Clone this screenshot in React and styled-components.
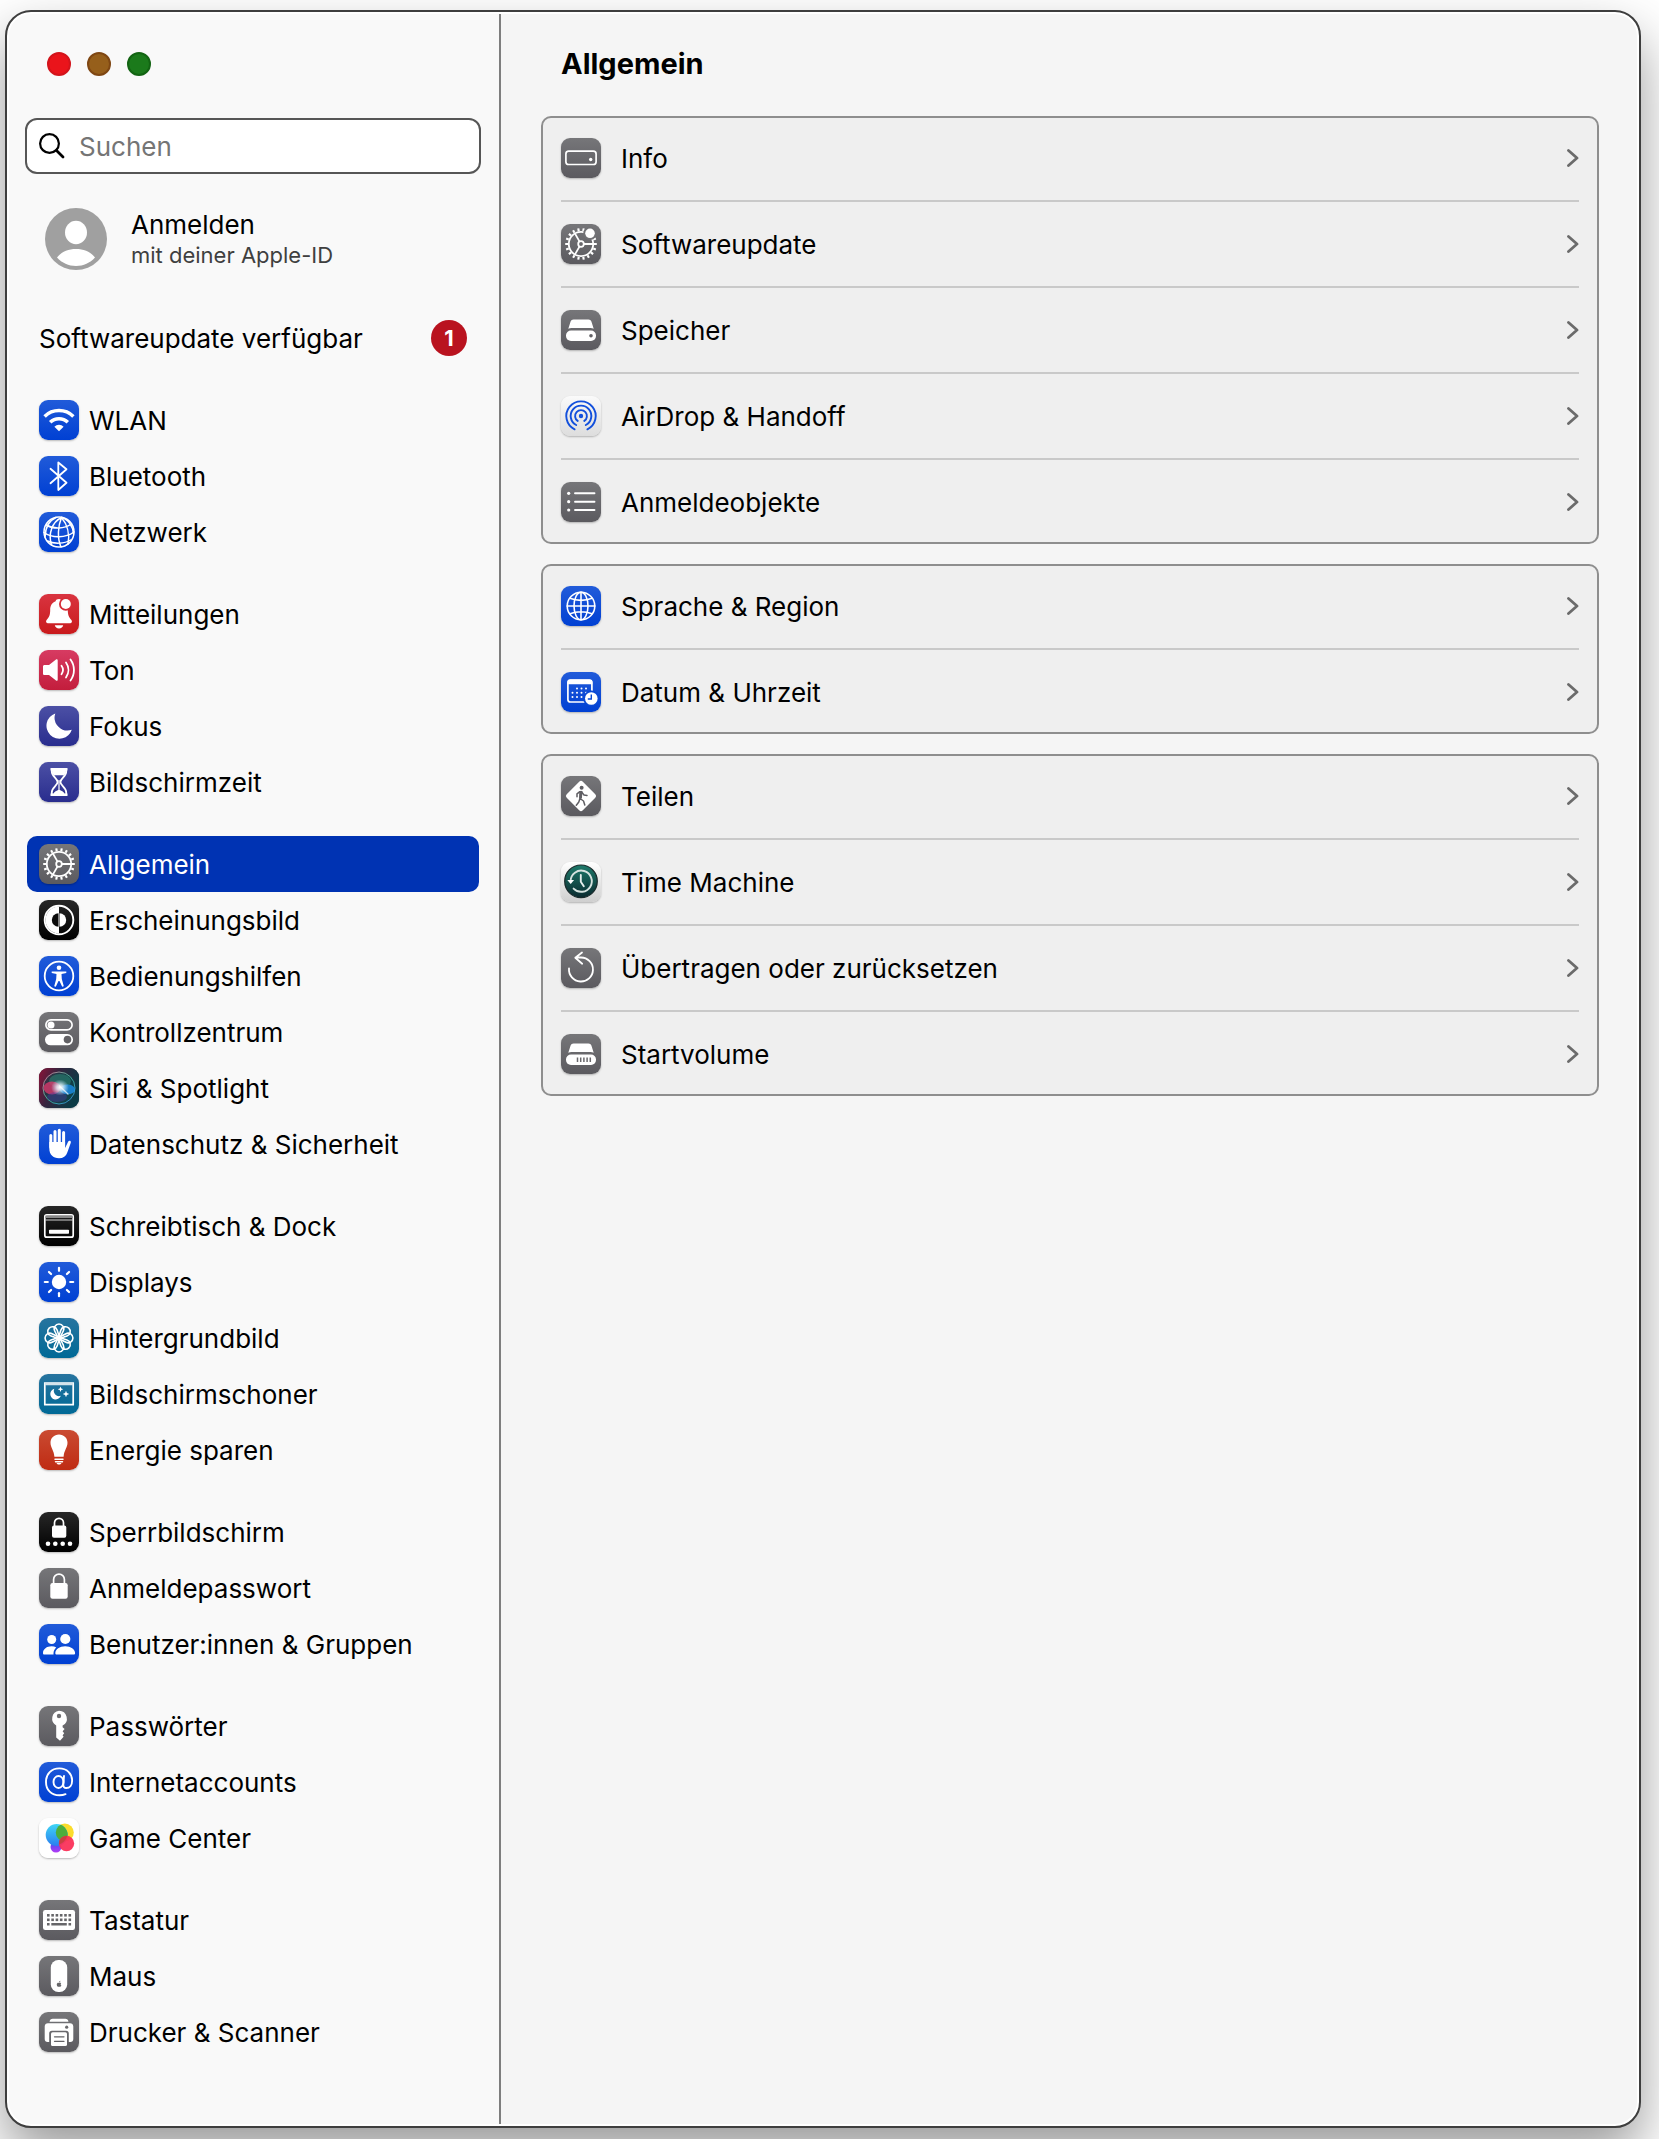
import React from "react";
import styled, { createGlobalStyle, css } from "styled-components";

const GlobalStyle = createGlobalStyle`
  *, *::before, *::after { box-sizing: border-box; }
  body {
    margin: 0;
    background: #fff;
    color: #000;
    font-family: Inter, "Liberation Sans", sans-serif;
    font-size: 26px;
    line-height: 32px;
  }
  ul { list-style: none; margin: 0; padding: 0; }
  a { color: inherit; text-decoration: none; }
`;

const Desktop = styled.div`
  min-height: 100vh;
  padding: 10px 18px 11px 5px;
  display: flex;
  overflow: hidden;
`;

const Window = styled.div`
  flex: 1;
  display: flex;
  padding: 2px;
  border: 2px solid #3e3e3e;
  border-radius: 26px;
  background: #fff;
  box-shadow: 0 26px 54px rgba(0, 0, 0, 0.4);
`;

const Sidebar = styled.aside`
  flex: none;
  width: 492px;
  padding: 38px 18px 60px 16px;
  background: #f9f9f9;
  border-right: 2px solid #7e7e7e;
  border-radius: 22px 0 0 22px;
`;

const Main = styled.main`
  flex: 1;
  min-width: 0;
  padding: 32px 38px 40px 40px;
  background: #f5f5f5;
  border-radius: 0 22px 22px 0;
`;

const WindowControls = styled.div`
  display: flex;
  gap: 16px;
  padding-left: 22px;
`;

const Light = styled.button`
  width: 24px;
  height: 24px;
  padding: 0;
  border: 2px solid ${(p) => p.$edge};
  border-radius: 50%;
  background: ${(p) => p.$fill};
`;

const SearchField = styled.label`
  display: flex;
  align-items: center;
  gap: 14px;
  height: 56px;
  margin-top: 42px;
  padding: 0 12px;
  border: 2px solid #565656;
  border-radius: 12px;
  background: #fff;
`;

const SearchInput = styled.input`
  flex: 1;
  min-width: 0;
  padding: 2px 0 0;
  border: 0;
  outline: 0;
  background: transparent;
  font: inherit;
  &::placeholder { color: #757575; opacity: 1; }
`;

const Account = styled.a`
  display: flex;
  align-items: center;
  gap: 24px;
  margin-top: 34px;
  padding-left: 20px;
`;

const AccountText = styled.div`
  display: flex;
  flex-direction: column;
`;

const AccountHint = styled.span`
  font-size: 22px;
  line-height: 28px;
  color: #3f3f3f;
`;

const UpdateNotice = styled.a`
  display: flex;
  align-items: center;
  justify-content: space-between;
  height: 56px;
  margin-top: 40px;
  padding: 0 14px;
`;

const Badge = styled.span`
  width: 36px;
  height: 36px;
  border-radius: 50%;
  background: #b9131f;
  color: #fff;
  font-size: 22px;
  font-weight: 700;
  line-height: 36px;
  text-align: center;
`;

const NavGroup = styled.ul`
  margin: 26px 2px 0;
`;

const NavLink = styled.a`
  display: flex;
  align-items: center;
  gap: 10px;
  height: 56px;
  padding: 0 12px;
  border-radius: 10px;
  ${(p) => p.$active && css`
    background: #0033b3;
    color: #fff;
  `}
`;

const Label = styled.span`
  flex: 1;
  padding-top: 2px;
`;

const Title = styled.h1`
  margin: 0 0 34px;
  padding-left: 20px;
  font-size: 29px;
  font-weight: 700;
  line-height: 36px;
`;

const Card = styled.ul`
  padding: 0 18px;
  border: 2px solid #8e8e8e;
  border-radius: 10px;
  background: #efefef;
  & + & { margin-top: 20px; }
`;

const CardItem = styled.li`
  & + & { border-top: 2px solid #c9c9c9; }
  &:first-child > a { padding-top: 20px; }
  &:last-child > a { padding-bottom: 20px; }
`;

const CardLink = styled.a`
  display: flex;
  align-items: center;
  gap: 20px;
  padding: 22px 0;
`;

const tones = {
  blue: ["#215bd9", "#0040d3"],
  red: ["#d93440", "#c91a1c"],
  pink: ["#d73b62", "#c31d3c"],
  indigo: ["#4c50a5", "#292d8e"],
  gray: ["#767679", "#5b5a5f"],
  black: ["#272727", "#000000"],
  teal: ["#27749f", "#006996"],
  orange: ["#ca4b32", "#bf2b13"],
  white: ["#ffffff", "#ffffff"],
  silver: ["#fafafa", "#dddddd"],
  pearl: ["#ffffff", "#cfcfcf"],
  siri: ["#2a1c2c", "#123050"],
};

const Tile = styled.span`
  flex: none;
  width: 40px;
  height: 40px;
  border-radius: 9px;
  overflow: hidden;
  background: linear-gradient(${(p) => tones[p.$tone][0]}, ${(p) => tones[p.$tone][1]});
  box-shadow: 0 1px 2px rgba(0, 0, 0, 0.26);
  svg { display: block; }
`;

const line = { fill: "none", stroke: "#fff", strokeLinecap: "round", strokeLinejoin: "round" };

const spin = (count, draw) =>
  Array.from({ length: count }, (_, i) => (
    <g key={i} transform={`rotate(${(i * 360) / count} 20 20)`}>{draw}</g>
  ));

const Gear = () => (
  <g {...line} strokeLinecap="butt" strokeWidth="1.8">
    <circle cx="20" cy="20" r="12.2" />
    <circle cx="20" cy="20" r="2.8" />
    {spin(18, <path d="M33 20h2.8" strokeWidth="2.1" />)}
    {spin(3, <path d="M22.8 20H32" />)}
  </g>
);

const Drive = () => (
  <>
    <path d="M12.5 9.5h15c1.4 0 2.4.7 2.9 2l2.3 7.200c-1-.4-2-.6-3.200-.6h-19c-1.200 0-2.200.2-3.200.6l2.300-7.200c.5-1.300 1.500-2 2.900-2z" fill="#fff" />
    <rect x="5" y="20.5" width="30" height="10.5" rx="5" fill="#fff" />
  </>
);

const glyphs = {
  wifi: (
    <>
      <path d="M5.6 16.5a20.5 20.5 0 0 1 28.8 0M11.2 22.3a12.5 12.5 0 0 1 17.6 0" {...line} strokeWidth="3.5" strokeLinecap="butt" />
      <path d="M20 31.3l-4.6-4.6a6.5 6.5 0 0 1 9.2 0z" fill="#fff" />
    </>
  ),
  bluetooth: <path d="M11.5 12.8l16 14L19.3 34V6.500l8.200 6.700-16 14" {...line} strokeWidth="1.8" />,
  network: (
    <g {...line} strokeWidth="1.5">
      <circle cx="20" cy="20" r="15" />
      <path d="M22.5 5.5C13 10 9 22 12.5 33M22.5 5.5C19 14 18 26 22 35M22.5 5.5C28 12 31 22 29 32" />
      <path d="M17 5.5C11 8 6.500 14 6 25M22.500 5.500C29 7 34 14 34.500 22" />
      <path d="M7.500 13c7 4.500 17.500 4 25-1M5 20.500c8 6 22 5.500 30-.5M8.500 29c6 3 17 3 23-1" />
    </g>
  ),
  bell: (
    <>
      <path d="M20 5c-2 0-3 .8-3.400 2.200C12.500 8.800 11.200 12 11.200 16c0 5-1.200 7.500-3.600 10-1 1.200-.6 3.200 1 3.200h22.800c1.600 0 2-2 1-3.200-2.400-2.500-3.600-5-3.600-10 0-4-1.300-7.200-5.400-8.800C23 5.800 22 5 20 5z" fill="#fff" />
      <path d="M15.800 31.300h8.400c-.3 2-2 3.200-4.200 3.200s-3.900-1.200-4.200-3.200z" fill="#fff" />
      <circle cx="26.8" cy="10" r="6.800" fill="#d52d37" />
      <circle cx="26.8" cy="10" r="5" fill="#fff" />
    </>
  ),
  sound: (
    <>
      <path d="M4 16.500c0-1 .6-1.600 1.600-1.600H10l7-5.400c.8-.6 1.700-.2 1.700.8v19.400c0 1-.9 1.400-1.700.8l-7-5.400H5.600c-1 0-1.600-.6-1.600-1.600z" fill="#fff" />
      <path d="M22.500 15.800c1.800 2.500 1.800 5.900 0 8.400M27 12.500c3.200 4.500 3.200 10.500 0 15M31.500 9.500c4.600 6.300 4.600 14.700 0 21" {...line} strokeWidth="1.8" />
    </>
  ),
  moon: <path d="M16.300 7.400A13 13 0 1 0 32.800 23.800 13 13 0 0 1 16.300 7.400z" fill="#fff" />,
  hourglass: (
    <>
      <path d="M12.800 7.200h14.400v2.600c0 4.600-5.800 6.700-5.800 10.200s5.800 5.600 5.800 10.200v2.600H12.800v-2.600c0-4.600 5.800-6.700 5.800-10.200s-5.800-5.600-5.800-10.200z" {...line} strokeWidth="1.8" />
      <path d="M11.500 6h17v2.600h-17zM11.500 31.400h17V34h-17zM13 8h14c0 2.500-.8 3.800-2 5.200H15C13.800 11.800 13 10.500 13 8zM20 27.500c2.500 1.200 4.600 2.300 6 4.500H14c1.400-2.200 3.500-3.300 6-4.500zM19.400 18h1.200v11h-1.200z" fill="#fff" />
    </>
  ),
  gear: <Gear />,
  appearance: (
    <>
      <circle cx="20" cy="20" r="14.3" {...line} strokeWidth="1.9" />
      <path d="M20 6.500a13.500 13.500 0 0 0 0 27z" fill="#fff" />
      <path d="M19.500 13.300a6.700 6.700 0 0 0 0 13.400z" fill="#0c0c0c" />
      <path d="M20.500 13.300a6.700 6.700 0 0 1 0 13.400z" fill="#fff" />
    </>
  ),
  accessibility: (
    <>
      <circle cx="20" cy="20" r="14.3" {...line} strokeWidth="1.8" />
      <circle cx="20" cy="11.8" r="2.3" fill="#fff" />
      <path d="M12.700 15.500h14.600v1.600l-4.800.9.300 5 2 7.300-1.600.5L20.500 25h-1l-2.700 5.800-1.600-.5 2-7.300.3-5-4.800-.9z" fill="#fff" />
    </>
  ),
  switches: (
    <>
      <rect x="6.9" y="7.9" width="26.2" height="10" rx="5" {...line} strokeWidth="1.7" />
      <circle cx="12" cy="12.9" r="3.5" fill="#fff" />
      <rect x="6" y="22" width="28" height="11.3" rx="5.6" fill="#fff" />
      <circle cx="28.5" cy="27.6" r="3.8" fill="#626165" />
    </>
  ),
  siri: (
    <>
      <defs>
        <linearGradient id="siriBack" x1="0" y1="0" x2="1" y2="0.4">
          <stop offset="0" stopColor="#8c1238" />
          <stop offset="0.45" stopColor="#35243e" />
          <stop offset="1" stopColor="#0b3a45" />
        </linearGradient>
        <linearGradient id="siriRing" x1="0" y1="0" x2="1" y2="1">
          <stop offset="0" stopColor="#e06a95" />
          <stop offset="0.5" stopColor="#3fb093" />
          <stop offset="1" stopColor="#2b7fd6" />
        </linearGradient>
        <radialGradient id="siriGlow">
          <stop offset="0" stopColor="#fff" />
          <stop offset="0.35" stopColor="#e8f6ff" stopOpacity="0.8" />
          <stop offset="1" stopColor="#bfe6ff" stopOpacity="0" />
        </radialGradient>
      </defs>
      <rect width="40" height="40" fill="url(#siriBack)" />
      <circle cx="20" cy="20" r="16" fill="#0d4a4c" fillOpacity="0.5" stroke="url(#siriRing)" strokeWidth="1" />
      <ellipse cx="21" cy="13" rx="11" ry="7" fill="#2f9c80" opacity="0.45" />
      <ellipse cx="13" cy="20" rx="8.5" ry="6.5" fill="#e3386e" opacity="0.75" />
      <ellipse cx="28.500" cy="21.5" rx="7.5" ry="5" fill="#1c8fe8" opacity="0.8" />
      <ellipse cx="18" cy="29" rx="10" ry="5" fill="#4b3ea8" opacity="0.4" />
      <ellipse cx="21" cy="19.5" rx="9" ry="8" fill="url(#siriGlow)" />
      <path d="M20.500 18L29 26" stroke="#fff" strokeWidth="1.200" strokeLinecap="round" opacity="0.7" />
    </>
  ),
  hand: (
    <>
      <path d="M11.800 11.500V23M16 7.500V21M20.300 6.300V21M24.600 8.500V22" {...line} strokeWidth="3" />
      <path d="M10.300 18h15.800v6l3-6.300c.7-1.500 3.300-1 2.700 1l-3.400 9.500c-1.400 4-4.200 6-8.400 6-6 0-9.700-3.700-9.700-10z" fill="#fff" />
    </>
  ),
  dock: (
    <>
      <rect x="5.8" y="8.8" width="28.4" height="22.4" rx="2" {...line} strokeWidth="1.7" />
      <path d="M6.500 9.500h27V12h-27z" fill="#8a8a8a" />
      <path d="M6 14h28" stroke="#cfcfcf" strokeWidth="1" />
      <rect x="10" y="23.7" width="20" height="4" rx="0.8" fill="#fff" />
    </>
  ),
  sun: (
    <>
      <circle cx="20" cy="20" r="7.2" fill="#fff" />
      {spin(8, <path d="M31.200 20h3" {...line} strokeWidth="2.2" />)}
    </>
  ),
  flower: (
    <g {...line} strokeWidth="1.6">
      {spin(8, <path d="M20 21.500L15.700 13A4.800 4.800 0 1 1 24.300 13z" />)}
    </g>
  ),
  screensaver: (
    <>
      <path d="M5.800 9.200h28.400v21.400H5.800z" {...line} strokeWidth="1.7" strokeLinejoin="miter" />
      <path d="M5.800 9h28.400v2.200H5.800z" fill="#d4e4ec" />
      <path d="M15.300 14.800A5.400 5.400 0 1 0 21.800 21.800 5.200 5.200 0 0 1 15.300 14.800z" fill="#fff" />
      <path d="M21.500 12.500l.8 2 2 .8-2 .8-.8 2-.8-2-2-.8 2-.8zM27 16.700l.9 2.400 2.400.9-2.400.9-.9 2.400-.9-2.400-2.400-.9 2.400-.9z" fill="#fff" />
    </>
  ),
  bulb: (
    <>
      <path d="M20 4.500c5 0 8.500 3.600 8.500 8.300 0 5-3.300 7.200-3.900 13.900h-9.200c-.6-6.700-3.900-8.900-3.900-13.900 0-4.700 3.500-8.300 8.500-8.300z" fill="#fff" />
      <path d="M16 29.200h8M16.500 31.800h7" {...line} strokeWidth="1.5" />
      <path d="M17.500 33h5c-.6 1-1.400 1.500-2.500 1.500s-1.900-.5-2.500-1.500z" fill="#fff" />
    </>
  ),
  lockDots: (
    <>
      <path d="M15.500 14v-3.200a4.500 4.500 0 0 1 9 0V14" {...line} strokeWidth="1.7" />
      <rect x="13" y="13.5" width="14.3" height="12.3" rx="2" fill="#fff" />
      {[9, 16.3, 23.7, 31].map((x) => <circle key={x} cx={x} cy="31.7" r="2.3" fill="#fff" />)}
    </>
  ),
  lock: (
    <>
      <path d="M14.600 15.500v-4a5.400 5.400 0 0 1 10.800 0v4" {...line} strokeWidth="1.7" />
      <rect x="11.3" y="15" width="17.4" height="15.7" rx="2.2" fill="#fff" />
    </>
  ),
  people: (
    <g fill="#fff">
      <circle cx="12.7" cy="15.5" r="4.5" />
      <circle cx="26.3" cy="15" r="5.1" />
      <path d="M4 29c0-4 3.800-6.800 8.500-6.800 1.900 0 3.500.4 4.800 1.200-1.800 1.600-2.800 3.700-2.800 6.100v1H5.300C4.500 30.500 4 30 4 29z" />
      <path d="M16.300 29.200c0-4 4.400-7 9.900-7s9.900 3 9.900 7c0 .8-.6 1.300-1.400 1.300H17.700c-.8 0-1.400-.5-1.400-1.300z" />
    </g>
  ),
  key: (
    <>
      <path d="M20 4.700a7.900 7.900 0 0 1 3.600 14.900v1.600l2 1.800-2 2.200 1.600 2-1.600 2 1 1.600-3.600 3.900-3.800-3.200V19.400A7.900 7.900 0 0 1 20 4.700z" fill="#fff" />
      <circle cx="20" cy="10" r="2.2" fill="#6d6d70" />
    </>
  ),
  at: (
    <g {...line} strokeWidth="1.9">
      <ellipse cx="19.5" cy="20" rx="5" ry="6" />
      <path d="M25 14l-.7 8.500c-.2 2.300 1 3.500 3 3.500 3.400 0 5.800-2.800 5.800-7.300C33.100 11.500 27.800 6.400 20.300 6.400 12.500 6.400 7 11.800 7 19.900 7 28 12.300 33.300 20.500 33.300c2.300 0 4.300-.4 6-1.100" />
    </g>
  ),
  gameCenter: (
    <>
      <defs>
        <linearGradient id="gcBlue" x1="0" y1="0" x2="0" y2="1">
          <stop offset="0" stopColor="#3fd6f5" />
          <stop offset="1" stopColor="#2a7df0" />
        </linearGradient>
        <linearGradient id="gcPurple" x1="0" y1="0" x2="0" y2="1">
          <stop offset="0" stopColor="#3a50f0" />
          <stop offset="1" stopColor="#b43af5" />
        </linearGradient>
        <clipPath id="gcOverlap"><circle cx="25.8" cy="14.5" r="9" /></clipPath>
      </defs>
      <circle cx="17" cy="29" r="5.5" fill="url(#gcPurple)" />
      <circle cx="25.8" cy="14.5" r="9" fill="#fbdc2c" />
      <circle cx="17.7" cy="17" r="11" fill="url(#gcBlue)" />
      <circle cx="17.7" cy="17" r="11" fill="#4cae3c" clipPath="url(#gcOverlap)" />
      <circle cx="27.5" cy="25.5" r="7.7" fill="#fb3158" opacity="0.94" />
      <path d="M20 24a7.700 7.700 0 0 1 8-6.200c-.6 3.500-3.300 7-8 8.800z" fill="#c9413f" />
    </>
  ),
  keyboard: (
    <>
      <rect x="4" y="10" width="32" height="20" rx="2.3" fill="#fff" />
      <g fill="#666669">
        {[14, 18.5].map((y) => [8, 12.3, 16.6, 20.9, 25.2, 29.5].map((x) => <rect key={`${x}-${y}`} x={x} y={y} width="2.6" height="2.6" />))}
        <path d="M8 23h2.600v2.600H8zM12.300 23h15.500v2.600H12.300zM29.500 23h2.600v2.600h-2.600z" />
      </g>
    </>
  ),
  mouse: (
    <>
      <rect x="11.8" y="4" width="16.4" height="32" rx="7.5" fill="#fff" />
      <path d="M20 26.400c.1-.9.700-1.500 1.400-1.600 0 .9-.6 1.600-1.400 1.600zM20 27c.6-.3 1.600-.5 2.200.3-.8.7-.7 1.800.2 2.300-.5 1.200-1.200 1.500-2.200 1.100-2 .7-3.300-2.900-1.700-3.800.5-.3 1-.1 1.500.1z" fill="#666669" />
    </>
  ),
  printer: (
    <>
      <path d="M10.500 9.800c.3-2 1.400-3.100 3.200-3.100h12.600c1.800 0 2.900 1.100 3.200 3.100z" fill="#fff" />
      <path d="M9 11.300h22c2 0 3.300 1.200 3.300 3.300V27c0 2-1.100 3-3 3h-1.500v-8.500c0-1.800-1-2.800-2.700-2.800H12.900c-1.700 0-2.700 1-2.700 2.800V30H8.700c-1.900 0-3-1-3-3V14.600c0-2.100 1.300-3.300 3.300-3.300z" fill="#fff" />
      <circle cx="27.7" cy="15.2" r="1.6" fill="#6a6a6d" />
      <rect x="12" y="20.3" width="16" height="13.7" rx="1.6" fill="#fff" />
      <path d="M15.500 24.800h9.500M15.500 29.300h9.500" stroke="#626165" strokeWidth="1.3" strokeLinecap="round" />
    </>
  ),
  computer: (
    <>
      <rect x="4.9" y="13.1" width="30.2" height="13.4" rx="2.8" {...line} strokeWidth="1.7" />
      <circle cx="29.7" cy="21.5" r="1.7" fill="#fff" />
    </>
  ),
  gearBadge: (
    <>
      <Gear />
      <circle cx="29" cy="9.3" r="6.7" fill="#717174" />
      <circle cx="29" cy="9.3" r="4.8" fill="#fff" />
    </>
  ),
  drive: (
    <>
      <Drive />
      <circle cx="30" cy="25.8" r="1.8" fill="#626165" />
    </>
  ),
  airdrop: (
    <>
      <g {...line} stroke="#1350dc" strokeWidth="1.9">
        <path d="M13.600 33.300a14.700 14.700 0 1 1 12.800 0" />
        <path d="M15.200 29a10.300 10.300 0 1 1 9.600 0" />
        <path d="M16.700 24.900a5.900 5.900 0 1 1 6.600 0" />
      </g>
      <circle cx="20" cy="20" r="2.2" fill="#1350dc" />
    </>
  ),
  list: (
    <>
      {[11.3, 19.7, 28].map((y) => (
        <g key={y}>
          <circle cx="7.7" cy={y} r="1.6" fill="#fff" />
          <path d={`M14 ${y}h19.5`} {...line} strokeWidth="1.9" />
        </g>
      ))}
    </>
  ),
  globe: (
    <g {...line} strokeWidth="1.6">
      <circle cx="20" cy="20" r="13.8" />
      <ellipse cx="20" cy="20" rx="7" ry="13.8" />
      <path d="M20 6.200v27.600M6.200 20h27.600M9 12.300c6.500 2.700 15.500 2.700 22 0M9 27.700c6.500-2.700 15.500-2.700 22 0" />
    </g>
  ),
  calendar: (
    <>
      <rect x="6.9" y="8.2" width="24" height="21.8" rx="2.6" {...line} strokeWidth="1.7" />
      <path d="M6.500 12.300V10c0-1.600 1-2.500 2.500-2.500h19.700c1.600 0 2.600.9 2.600 2.500v2.300z" fill="#fff" />
      <g fill="#fff">
        {[[16, 16.5], [20.5, 16.5], [25, 16.5], [11.5, 20.8], [16, 20.8], [20.5, 20.8], [25, 20.8], [11.5, 25], [16, 25], [20.5, 25]].map(([x, y]) => (
          <circle key={`${x}-${y}`} cx={x} cy={y} r="1" />
        ))}
      </g>
      <circle cx="30.3" cy="26.5" r="8" fill="#0949d5" />
      <circle cx="30.3" cy="26.5" r="6.3" fill="#fff" />
      <path d="M30.300 22.500v4.500h-3.500" fill="none" stroke="#0949d5" strokeWidth="1.4" />
    </>
  ),
  sharing: (
    <>
      <rect x="8.6" y="8.6" width="22.8" height="22.8" rx="2.6" fill="#fff" transform="rotate(45 20 20)" />
      <circle cx="20.6" cy="11.8" r="2" fill="#5f5e63" />
      <path d="M20 15.500l-1 7 3.500 2.500 1.300 4M18.800 23l-1 3-2.500 3.200M18.500 15.800l-2.500 2v3M21 16.500l2 2.500 3 .5" fill="none" stroke="#5f5e63" strokeWidth="1.5" strokeLinecap="round" strokeLinejoin="round" />
      <path d="M18.300 15h3.200l-.6 7.500-2.800.2z" fill="#5f5e63" />
    </>
  ),
  timeMachine: (
    <>
      <defs>
        <linearGradient id="tmDisc" x1="0" y1="0" x2="0" y2="1">
          <stop offset="0" stopColor="#1d7a6a" />
          <stop offset="1" stopColor="#0b2b30" />
        </linearGradient>
      </defs>
      <circle cx="20" cy="19.3" r="16.3" fill="url(#tmDisc)" stroke="#1a2b2c" strokeWidth="1.2" />
      <path d="M9.600 19a10.600 10.600 0 1 1 3 7.600" {...line} stroke="#d5e2df" strokeWidth="1.9" />
      <path d="M6.300 18h6.800l-3.400 4z" fill="#fff" />
      <path d="M19.800 13v6.800l3 4.500" {...line} stroke="#e6eeec" strokeWidth="1.9" />
    </>
  ),
  reset: <path d="M8 20.500A12 12 0 1 0 20 9.500H14.500M21 4.500l-6.700 5.200 6.900 6" {...line} strokeWidth="1.8" />,
  startup: (
    <>
      <Drive />
      <path d="M16.500 23.500v4.500M19.700 23.500v4.500M22.900 23.500v4.500M26.100 23.500v4.500M29.300 23.500v4.500" stroke="#68676b" strokeWidth="1.5" />
    </>
  ),
};

const Icon = ({ name, tone }) => (
  <Tile $tone={tone}>
    <svg width="40" height="40" viewBox="0 0 40 40" aria-hidden="true">{glyphs[name]}</svg>
  </Tile>
);

const SearchIcon = () => (
  <svg width="26" height="26" viewBox="0 0 26 26" aria-hidden="true">
    <circle cx="10.5" cy="10.5" r="9.4" fill="none" stroke="#000" strokeWidth="2.200" />
    <path d="M17.500 17.500l6.500 6.500" stroke="#000" strokeWidth="2.8" strokeLinecap="round" />
  </svg>
);

const Avatar = () => (
  <svg width="62" height="62" viewBox="0 0 62 62" aria-hidden="true">
    <circle cx="31" cy="31" r="31" fill="#a0a0a0" />
    <ellipse cx="31" cy="24.5" rx="11" ry="11.7" fill="#fff" />
    <path d="M12 49.500C16 44 23 41 31 41s15 3 19 8.500C45 55 38.500 58 31 58s-14-3-19-8.500z" fill="#fff" />
  </svg>
);

const Chevron = () => (
  <svg width="12" height="20" viewBox="0 0 12 20" aria-hidden="true">
    <path d="M1.500 2.500l8.500 7.500-8.500 7.500" fill="none" stroke="#6b6b6b" strokeWidth="2.8" strokeLinecap="round" strokeLinejoin="round" />
  </svg>
);

const navigation = [
  [
    ["WLAN", "wifi", "blue"],
    ["Bluetooth", "bluetooth", "blue"],
    ["Netzwerk", "network", "blue"],
  ],
  [
    ["Mitteilungen", "bell", "red"],
    ["Ton", "sound", "pink"],
    ["Fokus", "moon", "indigo"],
    ["Bildschirmzeit", "hourglass", "indigo"],
  ],
  [
    ["Allgemein", "gear", "gray"],
    ["Erscheinungsbild", "appearance", "black"],
    ["Bedienungshilfen", "accessibility", "blue"],
    ["Kontrollzentrum", "switches", "gray"],
    ["Siri & Spotlight", "siri", "siri"],
    ["Datenschutz & Sicherheit", "hand", "blue"],
  ],
  [
    ["Schreibtisch & Dock", "dock", "black"],
    ["Displays", "sun", "blue"],
    ["Hintergrundbild", "flower", "teal"],
    ["Bildschirmschoner", "screensaver", "teal"],
    ["Energie sparen", "bulb", "orange"],
  ],
  [
    ["Sperrbildschirm", "lockDots", "black"],
    ["Anmeldepasswort", "lock", "gray"],
    ["Benutzer:innen & Gruppen", "people", "blue"],
  ],
  [
    ["Passwörter", "key", "gray"],
    ["Internetaccounts", "at", "blue"],
    ["Game Center", "gameCenter", "white"],
  ],
  [
    ["Tastatur", "keyboard", "gray"],
    ["Maus", "mouse", "gray"],
    ["Drucker & Scanner", "printer", "gray"],
  ],
];

const sections = [
  [
    ["Info", "computer", "gray"],
    ["Softwareupdate", "gearBadge", "gray"],
    ["Speicher", "drive", "gray"],
    ["AirDrop & Handoff", "airdrop", "silver"],
    ["Anmeldeobjekte", "list", "gray"],
  ],
  [
    ["Sprache & Region", "globe", "blue"],
    ["Datum & Uhrzeit", "calendar", "blue"],
  ],
  [
    ["Teilen", "sharing", "gray"],
    ["Time Machine", "timeMachine", "pearl"],
    ["Übertragen oder zurücksetzen", "reset", "gray"],
    ["Startvolume", "startup", "gray"],
  ],
];

export default function App() {
  const current = "Allgemein";
  return (
    <>
      <GlobalStyle />
      <Desktop>
        <Window>
          <Sidebar>
            <WindowControls>
              <Light type="button" aria-label="Schließen" $fill="#ea141b" $edge="#d3141b" />
              <Light type="button" aria-label="Minimieren" $fill="#965f1b" $edge="#7f4713" />
              <Light type="button" aria-label="Zoomen" $fill="#1b7a1b" $edge="#136413" />
            </WindowControls>
            <SearchField>
              <SearchIcon />
              <SearchInput type="text" aria-label="Suchen" placeholder="Suchen" />
            </SearchField>
            <Account href="#anmelden">
              <Avatar />
              <AccountText>
                <span>Anmelden</span>
                <AccountHint>mit deiner Apple-ID</AccountHint>
              </AccountText>
            </Account>
            <UpdateNotice href="#softwareupdate">
              <Label>Softwareupdate verfügbar</Label>
              <Badge>1</Badge>
            </UpdateNotice>
            <nav>
              {navigation.map((group) => (
                <NavGroup key={group[0][0]}>
                  {group.map(([label, icon, tone]) => (
                    <li key={label}>
                      <NavLink href={`#${icon}`} $active={label === current} aria-current={label === current ? "page" : undefined}>
                        <Icon name={icon} tone={tone} />
                        <Label>{label}</Label>
                      </NavLink>
                    </li>
                  ))}
                </NavGroup>
              ))}
            </nav>
          </Sidebar>
          <Main>
            <Title>{current}</Title>
            {sections.map((items) => (
              <Card key={items[0][0]}>
                {items.map(([label, icon, tone]) => (
                  <CardItem key={label}>
                    <CardLink href={`#${icon}`}>
                      <Icon name={icon} tone={tone} />
                      <Label>{label}</Label>
                      <Chevron />
                    </CardLink>
                  </CardItem>
                ))}
              </Card>
            ))}
          </Main>
        </Window>
      </Desktop>
    </>
  );
}
